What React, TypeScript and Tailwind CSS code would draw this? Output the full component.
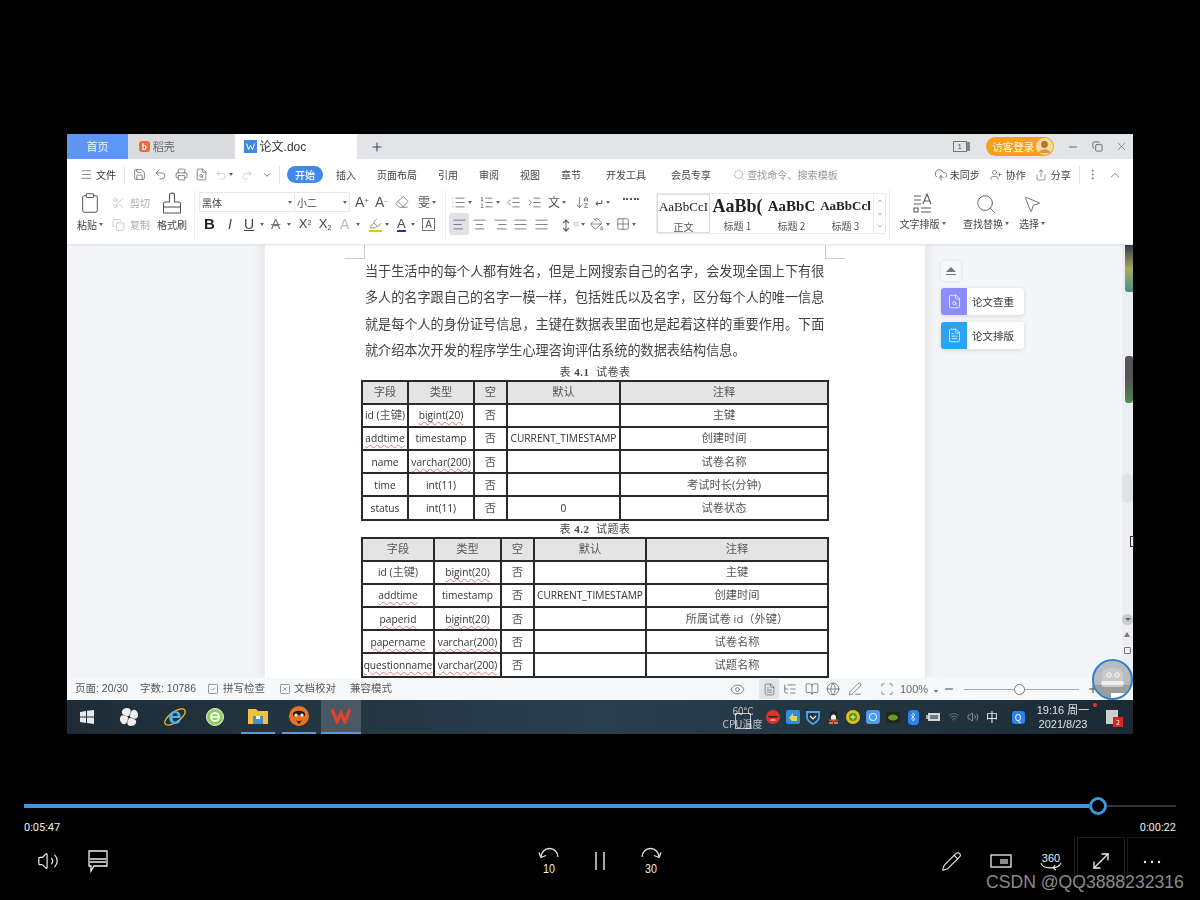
import React from 'react';
import {
  Menu, Save, Printer, FileSearch, Undo2, Redo2, ChevronDown, ChevronUp, Search, CloudUpload, UserPlus, Share,
  MoreVertical, Scissors, Copy, Clipboard, List, ListOrdered, IndentDecrease, IndentIncrease,
  AlignLeft, AlignCenter, AlignRight, AlignJustify, Eye, FileText, ListTree, BookOpen, Globe, PenLine, Scan,
  Minus, Plus, Eraser, Highlighter, Pencil, MoveDiagonal, Volume2, SquareCheck, SquareX, MousePointer2,
  X, Copy as Restore, ArrowDownAZ, PaintBucket, Grid2x2, Wifi, Bluetooth,
} from 'lucide-react';

const gray = '#55595f';

function Caret() {
  return <span className="inline-block w-0 h-0 border-x-[2px] border-x-transparent border-t-[3px] border-t-[#666] ml-[2px]" />;
}

function W({ children }: { children: React.ReactNode }) {
  return <span className="underline decoration-wavy decoration-[#d77] decoration-1 underline-offset-2">{children}</span>;
}

function Z({ children }: { children: React.ReactNode }) {
  return <span className="text-[11.25px] text-[#555]">{children}</span>;
}

interface DocTableProps {
  cols: string[];
  rows: React.ReactNode[][];
}

function DocTable({ cols, rows }: DocTableProps) {
  const head = ['字段', '类型', '空', '默认', '注释'];
  return (
    <table className="table-fixed border-collapse w-[466px] -ml-1 border-2 border-[#2a2a2a] text-center text-[10.2px] text-[#333] [font-family:'Open_Sans','Noto_Sans_CJK_SC',sans-serif]">
      <colgroup>
        {cols.map((c, i) => (
          <col key={i} className={c} />
        ))}
      </colgroup>
      <tbody>
        <tr className="bg-[#e4e4e4] h-[23px]">
          {head.map((h) => (
            <td key={h} className="border-2 border-[#2a2a2a] p-0"><Z>{h}</Z></td>
          ))}
        </tr>
        {rows.map((r, i) => (
          <tr key={i} className="h-[23.2px]">
            {r.map((c, j) => (
              <td key={j} className="border-2 border-[#2a2a2a] p-0 whitespace-nowrap leading-[14px]">{c}</td>
            ))}
          </tr>
        ))}
      </tbody>
    </table>
  );
}

function Skip({ label, flip }: { label: string; flip?: boolean }) {
  return (
    <svg width="24" height="28" viewBox="0 0 24 28" fill="none" stroke="#e8e8e8" strokeWidth="1.3">
      <g transform={flip ? 'matrix(-1 0 0 1 24 0)' : undefined}>
        <path d="M4 10 A8.5 8.5 0 0 1 21 10" />
        <path d="M2 5.5 L4 10.5 L9 8.5" />
      </g>
      <text x="12" y="26" textAnchor="middle" fontSize="13" fill="#eee" stroke="none" textLength="12" lengthAdjust="spacingAndGlyphs" fontFamily="Liberation Sans, sans-serif">{label}</text>
    </svg>
  );
}

export default function App() {
  return (
    <div className="w-[1200px] h-[900px] bg-black overflow-hidden relative pt-[134px] [font-family:'Noto_Sans_CJK_SC','Liberation_Sans',sans-serif]">
      {/* recorded desktop */}
      <div className="relative ml-[67px] w-[1066px] h-[600px] flex flex-col overflow-hidden blur-[0.4px] bg-white">
        {/* tabs */}
        <div className="h-[25px] bg-[#e2e4e7] flex items-stretch text-[11px] shrink-0">
          <div className="w-[61px] bg-[#5e96f6] text-white/90 flex items-center justify-center">首页</div>
          <div className="w-[107px] bg-[#d9dbde] text-[#666] flex items-center pl-[11px] gap-[3px]">
            <span className="w-[11px] h-[11px] rounded-[3px] bg-[#ee6a3c] text-white text-[8px] leading-[11px] text-center font-bold">b</span>
            稻壳
          </div>
          <div className="w-[123px] bg-white text-[#333] flex items-center pl-[9px] gap-[3px]">
            <svg width="13" height="13" viewBox="0 0 13 13"><rect width="13" height="13" fill="#3f8ae0" /><path d="M2.5 3.5 L4.5 9.5 L6.5 5.5 L8.5 9.5 L10.5 3.5" fill="none" stroke="#fff" strokeWidth="1" /></svg>
            <span className="[font-family:'Liberation_Sans','Noto_Sans_CJK_SC',sans-serif] text-[12px]">论文.doc</span>
          </div>
          <div className="w-[40px] flex items-center justify-center"><Plus size={14} color="#445" strokeWidth={1.8} /></div>
          <div className="ml-[549px] w-[30px] flex items-center justify-center">
            <span className="w-[14px] h-[11px] border border-[#777] text-[8px] leading-[9px] text-center text-[#555] [font-family:'Liberation_Sans']">1</span>
            <span className="w-[3px] h-[9px] bg-[#888]" />
          </div>
          <div className="ml-[10px] my-[3px] w-[68px] rounded-full bg-[#f5a11c] text-white/90 text-[10.5px] flex items-center pl-[6px] pr-[1px] justify-between">
            访客登录
            <svg width="17" height="17" viewBox="0 0 17 17"><circle cx="8.5" cy="8.5" r="8.5" fill="#fbd79a" /><circle cx="8.5" cy="6.5" r="3.4" fill="#a8793a" /><path d="M2.5 15 C4 10 13 10 14.5 15 Z" fill="#d59b4a" /></svg>
          </div>
          <div className="ml-[6px] flex items-center">
            <span className="w-[25px] flex justify-center"><Minus size={12} color="#666" /></span>
            <span className="w-[24px] flex justify-center"><Restore size={11} color="#666" /></span>
            <span className="w-[24px] flex justify-center"><X size={13} color="#666" strokeWidth={1.3} /></span>
          </div>
        </div>

        {/* menu row */}
        <div className="h-[31px] bg-white flex items-center text-[10px] text-[#444] shrink-0 whitespace-nowrap">
          <span className="ml-[13px] w-[16px]"><Menu size={13} color={gray} strokeWidth={1.3} /></span>
          <span className="text-[#333]">文件</span>
          <span className="ml-[8px] w-px h-[18px] bg-[#e6e6e6]" />
          <span className="ml-[8px] w-[21px]"><Save size={13} color={gray} strokeWidth={1.3} /></span>
          <span className="w-[21px]"><Undo2 size={13} color={gray} strokeWidth={1.3} /></span>
          <span className="w-[20px]"><Printer size={13} color={gray} strokeWidth={1.3} /></span>
          <span className="w-[20px]"><FileSearch size={13} color={gray} strokeWidth={1.3} /></span>
          <span className="w-[26px] flex items-center"><Undo2 size={12} color="#bbb" strokeWidth={1.3} /><Caret /></span>
          <span className="w-[21px]"><Redo2 size={12} color="#bbb" strokeWidth={1.3} /></span>
          <span className="w-[10px]"><ChevronDown size={10} color={gray} /></span>
          <span className="ml-[7px] w-px h-[18px] bg-[#e6e6e6]" />
          <span className="ml-[7px] w-[36px] h-[17px] rounded-full bg-[#3f8ae8] text-white text-center leading-[17px] font-medium">开始</span>
          <span className="ml-[13px]">插入</span>
          <span className="ml-[21px]">页面布局</span>
          <span className="ml-[21px]">引用</span>
          <span className="ml-[21px]">审阅</span>
          <span className="ml-[21px]">视图</span>
          <span className="ml-[21px]">章节</span>
          <span className="ml-[25px]">开发工具</span>
          <span className="ml-[25px]">会员专享</span>
          <span className="ml-[22px] mr-[2px]"><Search size={12} color="#999" strokeWidth={1.3} /></span>
          <span className="text-[#999] text-[10.1px]">查找命令、搜索模板</span>
          <span className="ml-[96px] mr-[2px]"><CloudUpload size={14} color={gray} strokeWidth={1.3} /></span>
          <span>未同步</span>
          <span className="ml-[10px] mr-[4px]"><UserPlus size={12} color={gray} strokeWidth={1.3} /></span>
          <span>协作</span>
          <span className="ml-[9px] mr-[4px]"><Share size={12} color={gray} strokeWidth={1.3} /></span>
          <span>分享</span>
          <span className="ml-[8px] w-px h-[18px] bg-[#e6e6e6]" />
          <span className="ml-[6px] w-[14px]"><MoreVertical size={13} color={gray} strokeWidth={1.3} /></span>
          <span className="ml-[8px]"><ChevronUp size={14} color={gray} strokeWidth={1.3} /></span>
        </div>

        {/* ribbon */}
        <div className="h-[55px] bg-white border-b border-[#e4e6e9] flex items-start text-[10px] text-[#444] shrink-0 whitespace-nowrap shadow-[0_1px_2px_#0001] z-10">
          <div className="ml-[10px] w-[26px] flex flex-col items-center">
            <Clipboard size={22} color={gray} strokeWidth={1.1} className="mt-[2px]" />
            <span className="mt-[3px] flex items-center">粘贴<Caret /></span>
          </div>
          <div className="ml-[9px] w-[38px] flex flex-col text-[#aaa] mt-[5px] gap-[7px]">
            <span className="flex items-center gap-[5px]"><Scissors size={14} color="#aaa" strokeWidth={1.1} />剪切</span>
            <span className="flex items-center gap-[5px]"><Copy size={14} color="#aaa" strokeWidth={1.1} />复制</span>
          </div>
          <div className="ml-[7px] w-[30px] flex flex-col items-center">
            <svg width="20" height="22" viewBox="0 0 20 22" fill="none" stroke={gray} strokeWidth="1.1" className="mt-[2px]">
              <path d="M7.5 10 V3 C7.5 0.5 12.5 0.5 12.5 3 V10 H17 C18.5 10 18.5 11 18.5 12 V21 H1.5 V12 C1.5 11 1.5 10 3 10 Z" />
              <path d="M1.5 15 H18.5" />
            </svg>
            <span className="mt-[3px]">格式刷</span>
          </div>
          <div className="ml-[7px] w-px h-[50px] bg-[#eee]" />
          <div className="ml-[4px] w-[246px] flex flex-col">
            <div className="flex items-center h-[20px] mt-[2px]">
              <div className="w-[95px] h-[20px] border border-[#e8e8e8] border-r-0 flex items-center justify-between px-[2px] rounded-l-[2px]">黑体<Caret /></div>
              <div className="w-[56px] h-[20px] border border-[#e8e8e8] flex items-center justify-between px-[2px] rounded-r-[2px]">小二<Caret /></div>
              <span className="ml-[5px] w-[20px] text-[14px] leading-none text-[#555] [font-family:'Liberation_Sans']">A<sup className="text-[8px]">+</sup></span>
              <span className="w-[20px] text-[14px] leading-none text-[#555] [font-family:'Liberation_Sans']">A<sup className="text-[8px]">-</sup></span>
              <span className="w-[23px]"><Eraser size={14} color={gray} strokeWidth={1.2} /></span>
              <span className="flex items-center text-[12px] text-[#555]">雯<Caret /></span>
            </div>
            <div className="flex items-center h-[20px] mt-[2px] text-[13px] text-[#444] [font-family:'Liberation_Sans','Noto_Sans_CJK_SC',sans-serif]">
              <span className="w-[21px] text-center font-bold text-[15px] text-[#222]">B</span>
              <span className="w-[20px] text-center italic text-[14px]">I</span>
              <span className="w-[27px] pl-[4px] flex items-center gap-[4px] text-[14px]"><span className="underline">U</span><Caret /></span>
              <span className="w-[28px] pl-[4px] flex items-center gap-[5px] text-[14px] text-[#777]"><span className="line-through">A</span><Caret /></span>
              <span className="w-[20px] text-center text-[13px]">X<sup className="text-[7px]">2</sup></span>
              <span className="w-[20px] text-center text-[13px]">X<sub className="text-[7px]">2</sub></span>
              <span className="w-[31px] pl-[5px] flex items-center gap-[5px] text-[14px] text-[#bbb]">A<Caret /></span>
              <span className="w-[25px] pl-[3px] flex items-center gap-[1px]"><span className="border-b-[2px] border-b-[#e8c400] h-[15px]"><Highlighter size={13} color={gray} strokeWidth={1.2} /></span><Caret /></span>
              <span className="w-[28px] pl-[6px] flex items-center gap-[3px] text-[13px]"><span className="border-b-[2px] border-[#1a2fc8] leading-[13px]">A</span><Caret /></span>
              <span className="ml-[3px] w-[13px] h-[13px] border border-[#777] text-[10px] leading-[11px] text-center text-[#555]">A</span>
            </div>
          </div>
          <div className="w-px h-[50px] bg-[#eee]" />
          <div className="ml-[3px] w-[205px] flex flex-col">
            <div className="h-[20px] mt-[2px] flex items-center">
              <span className="ml-[2px] w-[28px] flex items-center"><List size={15} color={gray} strokeWidth={1.2} /><Caret /></span>
              <span className="w-[27px] flex items-center"><ListOrdered size={15} color={gray} strokeWidth={1.2} /><Caret /></span>
              <span className="w-[21px]"><IndentDecrease size={15} color={gray} strokeWidth={1.2} /></span>
              <span className="w-[21px]"><IndentIncrease size={15} color={gray} strokeWidth={1.2} /></span>
              <span className="w-[27px] flex items-center text-[12px] text-[#555]">文<Caret /></span>
              <span className="w-[20px]"><ArrowDownAZ size={15} color={gray} strokeWidth={1.2} /></span>
              <span className="w-[28px] flex items-center text-[11px] text-[#555]">↵<Caret /></span>
              <span className="w-[16px] h-[9px] border-t-[2px] border-dotted border-[#555]" />
            </div>
            <div className="h-[20px] mt-[2px] flex items-center">
              <span className="w-[20px] h-[22px] bg-[#dfe3e8] rounded-[2px] flex items-center justify-center"><AlignLeft size={15} color={gray} strokeWidth={1.2} /></span>
              <span className="w-[21px] flex justify-center"><AlignCenter size={15} color={gray} strokeWidth={1.2} /></span>
              <span className="w-[20px] flex justify-center"><AlignRight size={15} color={gray} strokeWidth={1.2} /></span>
              <span className="w-[21px] flex justify-center"><AlignJustify size={15} color={gray} strokeWidth={1.2} /></span>
              <span className="w-[21px] flex justify-center"><AlignJustify size={15} color={gray} strokeWidth={1.2} /></span>
              <span className="ml-[7px] w-[26px] flex items-center text-[14px] text-[#555]">↕<AlignJustify size={12} color={gray} strokeWidth={1.2} /><Caret /></span>
              <span className="ml-[5px] w-[26px] flex items-center"><PaintBucket size={14} color={gray} strokeWidth={1.2} /><Caret /></span>
              <span className="w-[20px] flex items-center"><Grid2x2 size={14} color={gray} strokeWidth={1.2} /><Caret /></span>
            </div>
          </div>
          {/* style gallery */}
          <div className="ml-[2px] mt-[3px] w-[230px] h-[41px] border border-[#eaeaea] rounded-[2px] flex [font-family:'Liberation_Serif','Noto_Sans_CJK_SC',serif] text-[#222]">
            <div className="w-[53px] border border-[#ddd] overflow-hidden flex flex-col items-center shrink-0">
              <span className="text-[13px] h-[24px] leading-[24px]">AaBbCcI</span>
              <span className="text-[10px] text-[#555] [font-family:'Noto_Sans_CJK_SC']">正文</span>
            </div>
            <div className="w-[55px] overflow-hidden flex flex-col items-center shrink-0">
              <span className="text-[18px] h-[24px] leading-[24px] font-bold">AaBb(</span>
              <span className="text-[10px] text-[#555] [font-family:'Noto_Sans_CJK_SC']">标题 1</span>
            </div>
            <div className="w-[53px] overflow-hidden flex flex-col items-center shrink-0">
              <span className="text-[15px] h-[24px] leading-[24px] font-bold">AaBbC</span>
              <span className="text-[10px] text-[#555] [font-family:'Noto_Sans_CJK_SC']">标题 2</span>
            </div>
            <div className="w-[55px] overflow-hidden flex flex-col items-center shrink-0">
              <span className="text-[13px] h-[24px] leading-[24px] font-bold">AaBbCcl</span>
              <span className="text-[10px] text-[#555] [font-family:'Noto_Sans_CJK_SC']">标题 3</span>
            </div>
            <div className="flex-1 border-l border-[#eee] flex flex-col items-center justify-between py-[3px]">
              <ChevronUp size={8} color="#888" />
              <ChevronDown size={8} color="#888" />
              <ChevronDown size={8} color="#888" />
            </div>
          </div>
          <div className="ml-[3px] w-px h-[50px] bg-[#eee]" />
          <div className="ml-[9px] w-[47px] flex flex-col items-center">
            <svg width="20" height="22" viewBox="0 0 20 22" fill="none" stroke={gray} strokeWidth="1.1" className="mt-[3px]">
              <path d="M1 3h7M1 7h7M1 11h7M10 11 L14 1 L18 11M11.5 8h5M1 15h4v4H1zM8 15h10M8 19h10" />
            </svg>
            <span className="mt-[1px] flex items-center">文字排版<Caret /></span>
          </div>
          <div className="ml-[16px] w-[48px] flex flex-col items-center">
            <Search size={22} color={gray} strokeWidth={1} className="mt-[3px]" />
            <span className="mt-[1px] flex items-center">查找替换<Caret /></span>
          </div>
          <div className="ml-[8px] w-[28px] flex flex-col items-center">
            <MousePointer2 size={20} color={gray} strokeWidth={1} className="mt-[4px]" />
            <span className="mt-[2px] flex items-center">选择<Caret /></span>
          </div>
        </div>

        {/* document */}
        <div className="h-[433px] flex bg-[#f3f5f9] shrink-0 overflow-hidden">
          <div className="w-[198px] shrink-0" />
          <div className="relative w-[660px] shrink-0 bg-white pt-[13px] pl-[100px] text-[#333] shadow-[-6px_0_8px_#0000000d,6px_0_8px_#0000000d]">
            <div className="absolute left-[80px] top-0 w-[20px] h-[14px] border-r border-b border-[#ccc]" />
            <div className="absolute left-[560px] top-0 w-[20px] h-[14px] border-l border-b border-[#ccc]" />
            <div className="text-[13.14px] leading-[26.4px] whitespace-nowrap text-[#444]">
              <div>当于生活中的每个人都有姓名，但是上网搜索自己的名字，会发现全国上下有很</div>
              <div>多人的名字跟自己的名字一模一样，包括姓氏以及名字，区分每个人的唯一信息</div>
              <div>就是每个人的身份证号信息，主键在数据表里面也是起着这样的重要作用。下面</div>
              <div>就介绍本次开发的程序学生心理咨询评估系统的数据表结构信息。</div>
            </div>
            <div className="w-[460px] h-[16px] text-center text-[11px] leading-[16px] text-[#444] [font-family:'Liberation_Serif','Noto_Sans_CJK_SC',serif] tracking-[0.5px]">表 <b>4.1</b>&nbsp; 试卷表</div>
            <DocTable
              cols={['w-[46px]', 'w-[66px]', 'w-[33px]', 'w-[113px]', 'w-[208px]']}
              rows={[
                [<>id (<Z>主键</Z>)</>, <W>bigint(20)</W>, <Z>否</Z>, '', <Z>主键</Z>],
                [<W>addtime</W>, 'timestamp', <Z>否</Z>, 'CURRENT_TIMESTAMP', <Z>创建时间</Z>],
                ['name', <W>varchar(200)</W>, <Z>否</Z>, '', <Z>试卷名称</Z>],
                ['time', 'int(11)', <Z>否</Z>, '', <Z>考试时长(分钟)</Z>],
                ['status', 'int(11)', <Z>否</Z>, '0', <Z>试卷状态</Z>],
              ]}
            />
            <div className="w-[460px] h-[16px] text-center text-[11px] leading-[16px] text-[#444] [font-family:'Liberation_Serif','Noto_Sans_CJK_SC',serif] tracking-[0.5px]">表 <b>4.2</b>&nbsp; 试题表</div>
            <DocTable
              cols={['w-[72px]', 'w-[67px]', 'w-[33px]', 'w-[112px]', 'w-[182px]']}
              rows={[
                [<>id (<Z>主键</Z>)</>, <W>bigint(20)</W>, <Z>否</Z>, '', <Z>主键</Z>],
                [<W>addtime</W>, 'timestamp', <Z>否</Z>, 'CURRENT_TIMESTAMP', <Z>创建时间</Z>],
                [<W>paperid</W>, <W>bigint(20)</W>, <Z>否</Z>, '', <Z>所属试卷 id（外键）</Z>],
                [<W>papername</W>, <W>varchar(200)</W>, <Z>否</Z>, '', <Z>试卷名称</Z>],
                [<W>questionname</W>, <W>varchar(200)</W>, <Z>否</Z>, '', <Z>试题名称</Z>],
              ]}
            />
          </div>
          <div className="ml-[16px] mt-[16px] w-[83px] flex flex-col items-start shrink-0">
            <div className="w-[20px] h-[20px] bg-[#f6f7f9] rounded-[3px] shadow-[0_0_3px_#0002] flex flex-col items-center justify-center">
              <span className="w-0 h-0 border-x-[5px] border-x-transparent border-b-[5px] border-b-[#777]" />
              <span className="mt-[2px] w-[10px] h-px bg-[#777]" />
            </div>
            <div className="mt-[7px] w-[83px] h-[27px] bg-white rounded-[3px] shadow-[0_1px_4px_#0002] flex items-center overflow-hidden text-[10.5px] text-[#333]">
              <span className="w-[26px] h-full bg-[#8c8df8] flex items-center justify-center"><FileSearch size={15} color="#fff" strokeWidth={1.2} /></span>
              <span className="ml-[5px]">论文查重</span>
            </div>
            <div className="mt-[7px] w-[83px] h-[27px] bg-white rounded-[3px] shadow-[0_1px_4px_#0002] flex items-center overflow-hidden text-[10.5px] text-[#333]">
              <span className="w-[26px] h-full bg-[#2aa3f5] flex items-center justify-center"><FileText size={15} color="#fff" strokeWidth={1.2} /></span>
              <span className="ml-[5px]">论文排版</span>
            </div>
          </div>
          {/* scrollbar strip */}
          <div className="ml-[98px] w-[11px] shrink-0 bg-[#eceef3] relative">
            <div className="absolute left-0 top-[228px] w-[11px] h-[30px] rounded-full bg-[#e0e2e7]" />
            <div className="absolute left-0 top-[369px] w-[11px] h-[11px] rounded-full bg-[#c8cbd0] flex items-center justify-center">
              <span className="w-0 h-0 border-x-[3px] border-x-transparent border-t-[3px] border-t-[#666]" />
            </div>
            <div className="absolute left-[2px] top-[387px] w-0 h-0 border-x-[3px] border-x-transparent border-b-[5px] border-b-[#777]" />
            <div className="absolute left-[2px] top-[402px] w-[7px] h-[7px] border border-[#777] rounded-[1px]" />
          </div>
        </div>

        {/* status bar */}
        <div className="h-[22px] bg-[#f7f8fa] flex items-center text-[10.5px] text-[#555] shrink-0 whitespace-nowrap [font-family:'Liberation_Sans','Noto_Sans_CJK_SC',sans-serif]">
          <span className="ml-[8px] w-[65px]">页面: 20/30</span>
          <span className="w-[67px]">字数: 10786</span>
          <span className="w-[16px]"><SquareCheck size={12} color={gray} strokeWidth={1.2} /></span>
          <span className="w-[56px]">拼写检查</span>
          <span className="w-[15px]"><SquareX size={12} color={gray} strokeWidth={1.2} /></span>
          <span className="w-[56px]">文档校对</span>
          <span className="w-[44px]">兼容模式</span>
          <span className="ml-[336px] w-[29px]"><Eye size={15} color={gray} strokeWidth={1.2} /></span>
          <span className="w-[20px] h-[20px] bg-[#e2e4e8] rounded-[2px] flex items-center justify-center"><FileText size={13} color={gray} strokeWidth={1.2} /></span>
          <span className="ml-[4px] w-[22px]"><ListTree size={14} color={gray} strokeWidth={1.2} /></span>
          <span className="w-[21px]"><BookOpen size={14} color={gray} strokeWidth={1.2} /></span>
          <span className="w-[22px]"><Globe size={14} color={gray} strokeWidth={1.2} /></span>
          <span className="w-[32px]"><PenLine size={14} color={gray} strokeWidth={1.2} /></span>
          <span className="w-[20px]"><Scan size={14} color={gray} strokeWidth={1.2} /></span>
          <span className="flex items-center w-[43px] text-[11px] text-[#666]">100%<span className="ml-[4px]"><Caret /></span></span>
          <span className="w-[21px]"><Minus size={12} color="#444" strokeWidth={2} /></span>
          <div className="w-[115px] h-px bg-[#aaa] relative">
            <span className="absolute left-[50px] -top-[5px] w-[11px] h-[11px] rounded-full bg-white border border-[#777]" />
          </div>
          <span className="ml-[8px]"><Plus size={12} color="#444" strokeWidth={2} /></span>
        </div>

        {/* taskbar */}
        <div className="h-[34px] bg-gradient-to-r from-[#1e2c37] via-[#28404c] to-[#1c2a35] flex items-stretch text-white/80 shrink-0 whitespace-nowrap">
          <span className="ml-[13px] w-[39px] flex items-center">
            <svg width="14" height="14" viewBox="0 0 14 14" fill="#e8e8e8"><path d="M0 2 6 1v5.5H0zM7 .8 14 0v6.5H7zM0 7.5h6V13l-6-1zM7 7.5h7V14l-7-1z" /></svg>
          </span>
          <span className="w-[43px] flex items-center">
            <svg width="20" height="20" viewBox="0 0 20 20" fill="#eee">
              <path d="M10 9 C5 9 2 7 3 4 C4 1 9 0 11 2 C12.5 4 11 7 10 9Z" />
              <path d="M11 10 C11 5 13 2 16 3 C19 4 20 9 18 11 C16 12.5 13 11 11 10Z" />
              <path d="M10 11 C15 11 18 13 17 16 C16 19 11 20 9 18 C7.5 16 9 13 10 11Z" />
              <path d="M9 10 C9 15 7 18 4 17 C1 16 0 11 2 9 C4 7.5 7 9 9 10Z" />
            </svg>
          </span>
          <span className="w-[44px] flex items-center">
            <svg width="26" height="34" viewBox="0 0 26 34">
              <ellipse cx="13" cy="17" rx="12" ry="5" fill="none" stroke="#e8b830" strokeWidth="1.3" transform="rotate(-35 13 17)" />
              <text x="13" y="24" textAnchor="middle" fontSize="24" fontWeight="bold" fill="#4fb1ee" fontFamily="Liberation Sans, sans-serif">e</text>
            </svg>
          </span>
          <span className="w-[35px] flex items-center">
            <svg width="18" height="20" viewBox="0 0 18 20"><circle cx="9" cy="10" r="8.5" fill="#8fcf55" stroke="#eee" /><circle cx="9" cy="10" r="4" fill="none" stroke="#fff" strokeWidth="1.8" /><path d="M5 10h8" stroke="#fff" strokeWidth="1.5" /></svg>
          </span>
          <span className="w-[34px] flex items-center justify-center border-b-2 border-[#5b9bd5]">
            <svg width="20" height="18" viewBox="0 0 20 18"><path d="M0 2h8l2 2h10v13H0z" fill="#f0c040" /><rect x="5" y="9" width="10" height="8" fill="#4a90d0" /><rect x="8" y="9" width="4" height="3" fill="#fff" /></svg>
          </span>
          <span className="ml-[7px] w-[34px] flex items-center justify-center border-b-2 border-[#5b9bd5]">
            <svg width="20" height="20" viewBox="0 0 20 20"><circle cx="10" cy="10" r="10" fill="#e87320" /><path d="M4 7 C7 4 13 4 16 7 V10 C13 9 7 9 4 10 Z" fill="#1a1a1a" /><circle cx="7" cy="9" r="1.6" fill="#eee" /><circle cx="13" cy="9" r="1.6" fill="#eee" /><path d="M6 13 C8 16 12 16 14 13 L10 18 Z" fill="#1a1a1a" /></svg>
          </span>
          <span className="ml-[5px] w-[40px] bg-[#4a5863] border-b-2 border-[#5b9bd5] flex items-center justify-center">
            <svg width="20" height="16" viewBox="0 0 20 16" fill="none" stroke="#e5402c" strokeWidth="3.2"><path d="M1 1 L6 14 L10 5 L14 14 L19 1" /></svg>
          </span>
          <div className="flex items-center ml-[402px]">
            <span className="w-[20px] flex justify-center">
              <svg width="14" height="14" viewBox="0 0 14 14"><circle cx="7" cy="7" r="7" fill="#d8342a" /><path d="M2.5 6h9v1.5h-9z" fill="#222" /><path d="M4.5 10h5" stroke="#fff" strokeWidth="1" /></svg>
            </span>
            <span className="w-[20px] flex justify-center">
              <svg width="14" height="14" viewBox="0 0 14 14"><rect width="14" height="14" rx="2" fill="#2c8fe0" /><path d="M3 8 7 3v3h4v5H6" fill="#f2d24a" /></svg>
            </span>
            <span className="w-[20px] flex justify-center">
              <svg width="14" height="15" viewBox="0 0 14 15" fill="none" stroke="#4da6f5" strokeWidth="1.8"><path d="M1 2h12v5c0 4-4 6-6 7-2-1-6-3-6-7z" /><path d="M4 6l3 3 3-3" stroke="#fff" strokeWidth="1.2" /></svg>
            </span>
            <span className="w-[20px] flex justify-center">
              <svg width="13" height="15" viewBox="0 0 13 15"><ellipse cx="6.5" cy="6" rx="4" ry="5.5" fill="#222" /><ellipse cx="6.5" cy="8" rx="2.6" ry="3.4" fill="#eee" /><path d="M1.5 9.5h10l-1 2h-8z" fill="#d8342a" /><path d="M2 13h4M7 13h4" stroke="#e8a820" strokeWidth="1.6" /></svg>
            </span>
            <span className="w-[20px] flex justify-center">
              <svg width="14" height="14" viewBox="0 0 14 14"><circle cx="7" cy="7" r="7" fill="#e2c018" /><circle cx="7" cy="7" r="4" fill="#3a9a34" /><path d="M7 4.5v5M4.5 7h5" stroke="#f3e05a" strokeWidth="1.3" /></svg>
            </span>
            <span className="w-[20px] flex justify-center">
              <svg width="14" height="14" viewBox="0 0 14 14"><rect width="14" height="14" rx="3" fill="#4a9cf0" /><circle cx="7" cy="7" r="3.5" fill="none" stroke="#cfe6fc" strokeWidth="1.2" /></svg>
            </span>
            <span className="w-[20px] flex justify-center">
              <svg width="14" height="11" viewBox="0 0 14 11"><rect width="14" height="11" fill="#1d2a1a" /><ellipse cx="7" cy="5.5" rx="5" ry="3" fill="#6c9a26" /></svg>
            </span>
            <span className="w-[20px] flex justify-center">
              <span className="w-[11px] h-[15px] rounded-[4px] bg-[#2a83e8] flex items-center justify-center"><Bluetooth size={10} color="#fff" strokeWidth={1.6} /></span>
            </span>
            <span className="w-[20px] flex justify-center">
              <svg width="15" height="10" viewBox="0 0 15 10"><rect x="2" y="1" width="12" height="8" fill="#d5d5d5" /><rect x="4" y="3" width="8" height="4" fill="#6a7a84" /><path d="M0 3h2v4H0z" fill="#aaa" /></svg>
            </span>
            <span className="w-[21px] flex justify-center"><Wifi size={12} color="#999" strokeWidth={1.2} /></span>
            <span className="w-[18px] flex justify-center"><Volume2 size={12} color="#ccc" strokeWidth={1.2} /></span>
            <span className="w-[20px] text-center text-[12px] text-white/90">中</span>
            <span className="ml-[4px] w-[24px] flex justify-center"><span className="w-[13px] h-[13px] rounded-[3px] bg-[#2a83e8] text-[9px] leading-[13px] text-center text-white">Q</span></span>
          </div>
          <div className="ml-[3px] w-[60px] self-center text-center text-[11px] leading-[14px] text-white/85 [font-family:'Liberation_Sans','Noto_Sans_CJK_SC',sans-serif]">
            <div>19:16 周一</div>
            <div>2021/8/23</div>
          </div>
          <span className="ml-[13px] self-center relative w-[12px] h-[14px] bg-[#ccc]">
            <span className="absolute -right-[5px] -bottom-[3px] w-[10px] h-[10px] bg-[#d8281e] text-[7px] leading-[10px] text-center text-white">2</span>
          </span>
        </div>

        {/* overlays on the recording */}
        <div className="absolute left-[668px] top-[579px] w-[16px] h-[16px] border border-white/70" />
        <div className="absolute left-[656px] top-[570px] w-[40px] text-center text-[10px] leading-[13px] text-white/70 whitespace-nowrap">
          <div>60°C</div>
          <div className="-ml-[1px]">CPU温度</div>
        </div>
        <div className="absolute left-[1026px] top-[569px] w-[4px] h-[4px] rounded-full bg-[#e33]" />
        <div className="absolute left-[1058px] top-[111px] w-[8px] h-[47px] rounded-bl-[3px] bg-gradient-to-b from-[#33404a] via-[#a9a85a] to-[#3d8f8a]" />
        <div className="absolute left-[1058px] top-[222px] w-[8px] h-[47px] rounded-[3px] bg-gradient-to-b from-[#555] via-[#555] to-[#4d8a56]" />
        <div className="absolute left-[1025px] top-[525px] w-[41px] h-[41px] rounded-full border-2 border-[#2f80d0] bg-[#b9bbbd] overflow-hidden">
          <svg width="37" height="37" viewBox="0 0 37 37">
            <rect x="0" y="24" width="37" height="13" fill="#9b9d9f" />
            <path d="M8 26 V13 C8 5 29 5 29 13 V26 Z" fill="#c9cacb" />
            <circle cx="15" cy="14" r="2.2" fill="none" stroke="#fff" />
            <circle cx="23" cy="14" r="2.2" fill="none" stroke="#fff" />
            <rect x="7" y="20" width="23" height="4" rx="2" fill="#eee" />
            <rect x="17" y="32" width="20" height="5" fill="#fff" />
          </svg>
        </div>
      </div>
      <div className="absolute left-[1130px] top-[536px] w-[4px] h-[11px] border border-[#333] bg-white/10" />

      {/* player */}
      <div className="mt-[63px] h-[18px] flex items-center pl-[24px] w-[1176px]">
        <div className="w-[1065px] h-[4px] bg-[#3a96dd]" />
        <div className="w-[18px] h-[18px] rounded-full border-[3px] border-[#3a96dd] shrink-0" />
        <div className="flex-1 h-[2px] bg-[#333]" />
      </div>
      <div className="h-[22px] mt-[2px] flex justify-between items-center px-[24px] text-[11px] text-[#eee] [font-family:'Roboto','Liberation_Sans',sans-serif]">
        <span>0:05:47</span>
        <span>0:00:22</span>
      </div>
      <div className="flex pl-[24px] h-[48px] -mt-[2px]">
        <span className="w-12 flex items-center justify-center"><Volume2 size={22} color="#eee" strokeWidth={1.3} /></span>
        <span className="ml-[2px] w-12 flex items-center justify-center">
          <svg width="22" height="24" viewBox="0 0 22 24" fill="none" stroke="#eee" strokeWidth="1.3"><path d="M2 2h18v15H7l-3 5v-5H2z" /><path d="M3 10h16M3 13h16" /></svg>
        </span>
        <span className="ml-[403px] w-12 flex items-center justify-center"><Skip label="10" /></span>
        <span className="ml-[3px] w-12 flex items-center justify-center">
          <svg width="12" height="20" viewBox="0 0 12 20" stroke="#ddd" strokeWidth="1.5"><path d="M2 1v18M10 1v18" /></svg>
        </span>
        <span className="ml-[3px] w-12 flex items-center justify-center"><Skip label="30" flip /></span>
        <span className="ml-[252px] w-12 flex items-center justify-center"><Pencil size={21} color="#eee" strokeWidth={1.2} /></span>
        <span className="ml-[2px] w-12 flex items-center justify-center">
          <svg width="22" height="14" viewBox="0 0 22 14" fill="none" stroke="#eee" strokeWidth="1.3"><rect x="1" y="1" width="20" height="12" /><rect x="10" y="5" width="8" height="5" fill="#888" stroke="none" /></svg>
        </span>
        <span className="ml-[2px] w-12 flex items-center justify-center border-r border-[#1c1c1c]">
          <svg width="24" height="24" viewBox="0 0 24 24" fill="none" stroke="#eee" strokeWidth="1.1">
            <text x="12" y="13" textAnchor="middle" fontSize="11" fill="#eee" stroke="none" fontFamily="Liberation Sans, sans-serif">360</text>
            <path d="M2 14 C3 20 19 21 22 14M16 16 L14 19 L17 21" />
          </svg>
        </span>
        <span className="ml-[2px] w-12 flex items-center justify-center border border-[#1c1c1c]"><MoveDiagonal size={24} color="#eee" strokeWidth={1.3} /></span>
        <span className="ml-[2px] w-12 flex items-center justify-center border-l border-t border-[#181818]">
          <svg width="18" height="4" viewBox="0 0 18 4" fill="#eee"><circle cx="2" cy="2" r="1.2" /><circle cx="9" cy="2" r="1.2" /><circle cx="16" cy="2" r="1.2" /></svg>
        </span>
      </div>
      <div className="absolute left-[986px] top-[871px] text-[17.6px] leading-[22px] text-[#8a8a8a] whitespace-nowrap [font-family:'Liberation_Sans',sans-serif]">CSDN @QQ3888232316</div>
    </div>
  );
}
